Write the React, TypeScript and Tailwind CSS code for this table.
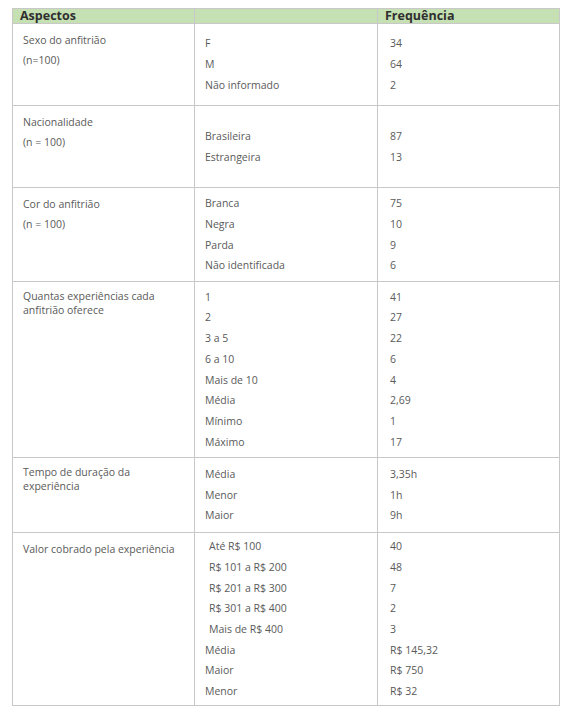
const rows: { label: string[]; wrap?: boolean; h: string; items: [string, string][]; indent?: number }[] = [
  {
    label: ["Sexo do anfitrião", "(n=100)"],
    h: "h-[82px]",
    items: [
      ["F", "34"],
      ["M", "64"],
      ["Não informado", "2"],
    ],
  },
  {
    label: ["Nacionalidade", "(n = 100)"],
    h: "h-[82px]",
    items: [
      ["Brasileira", "87"],
      ["Estrangeira", "13"],
    ],
  },
  {
    label: ["Cor do anfitrião", "(n = 100)"],
    h: "h-[94px]",
    items: [
      ["Branca", "75"],
      ["Negra", "10"],
      ["Parda", "9"],
      ["Não identificada", "6"],
    ],
  },
  {
    label: ["Quantas experiências cada", "anfitrião oferece"],
    wrap: true,
    h: "h-[176px]",
    items: [
      ["1", "41"],
      ["2", "27"],
      ["3 a 5", "22"],
      ["6 a 10", "6"],
      ["Mais de 10", "4"],
      ["Média", "2,69"],
      ["Mínimo", "1"],
      ["Máximo", "17"],
    ],
  },
  {
    label: ["Tempo de duração da", "experiência"],
    wrap: true,
    h: "h-[75px]",
    items: [
      ["Média", "3,35h"],
      ["Menor", "1h"],
      ["Maior", "9h"],
    ],
  },
  {
    label: ["Valor cobrado pela experiência"],
    h: "h-[173px]",
    indent: 5,
    items: [
      ["Até R$ 100", "40"],
      ["R$ 101 a R$ 200", "48"],
      ["R$ 201 a R$ 300", "7"],
      ["R$ 301 a R$ 400", "2"],
      ["Mais de R$ 400", "3"],
      ["Média", "R$ 145,32"],
      ["Maior", "R$ 750"],
      ["Menor", "R$ 32"],
    ],
  },
];

const cell = "border-r border-b border-[#c8c8c8]";

export default function App() {
  return (
    <div
      className="min-h-[716px] bg-white pt-[8px] pl-[12px] text-[10.5px] text-[#5a5a5a]"
      style={{ fontFamily: '"Open Sans", "Noto Sans", sans-serif' }}
    >
      <div className="w-[548px] border-l border-t border-[#c8c8c8]">
        {/* header */}
        <div className="grid h-[15px] grid-cols-[182px_183px_182px] bg-[#c5e0b3] text-[12.5px] font-bold leading-[14px] text-[#2f2f2f]">
          <div className={`${cell} pl-[7px]`}>Aspectos</div>
          <div className={cell}></div>
          <div className={`${cell} pl-[7px]`}>Frequência</div>
        </div>

        {rows.map((r, i) => (
          <div key={i} className={`grid grid-cols-[182px_183px_182px] ${r.h}`}>
            <div className={`${cell} pl-[10px] pt-[6px]`}>
              {r.wrap ? (
                <div className="pt-[2px] leading-[13.5px]">
                  {r.label.map((l) => (
                    <div key={l}>{l}</div>
                  ))}
                </div>
              ) : (
                r.label.map((l) => (
                  <div key={l} className="leading-[20px]">
                    {l}
                  </div>
                ))
              )}
            </div>
            <div className={`${cell} flex flex-col justify-center pl-[10px]`}>
              {r.items.map(([a], j) => (
                <div
                  key={j}
                  className={`leading-[20.7px] ${r.indent && j < 5 ? "pl-[4px]" : ""}`}
                >
                  {a}
                </div>
              ))}
            </div>
            <div className={`${cell} flex flex-col justify-center pl-[12px]`}>
              {r.items.map(([, b], j) => (
                <div key={j} className="leading-[20.7px]">
                  {b}
                </div>
              ))}
            </div>
          </div>
        ))}
      </div>
    </div>
  );
}
